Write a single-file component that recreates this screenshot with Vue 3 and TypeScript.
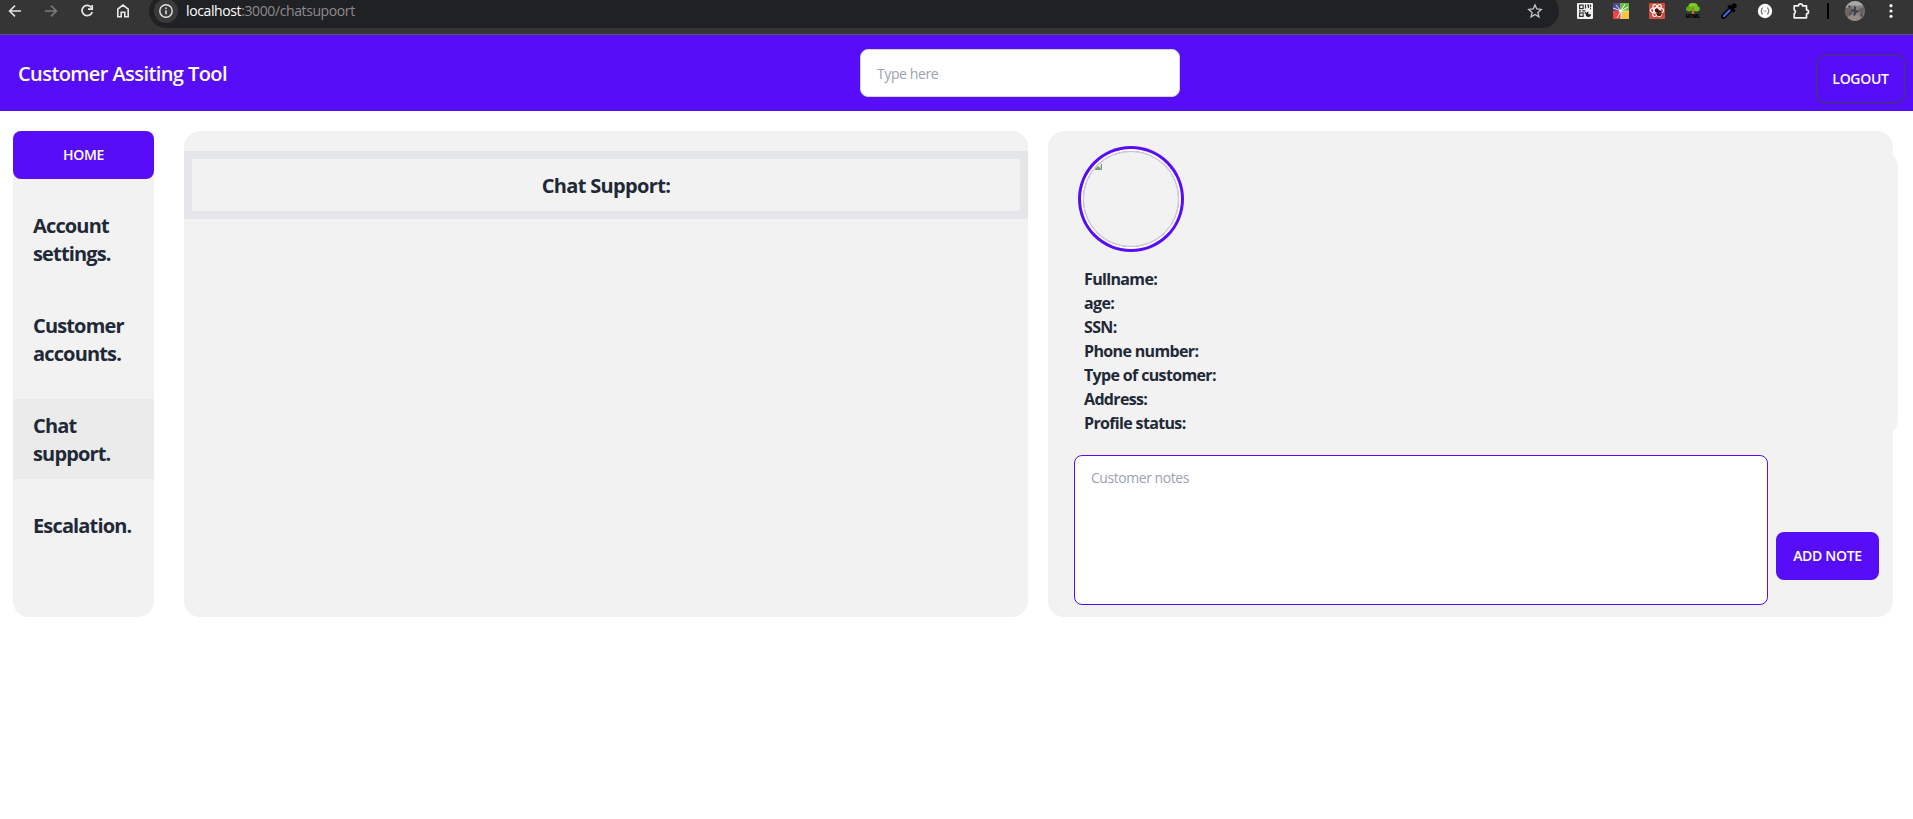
<script setup lang="ts">
import { ref } from 'vue'

interface NavItem {
  label: string
  active?: boolean
}

const navItems: NavItem[] = [
  { label: 'Account settings.' },
  { label: 'Customer accounts.' },
  { label: 'Chat support.', active: true },
  { label: 'Escalation.' },
]

const fields: string[] = [
  'Fullname:',
  'age:',
  'SSN:',
  'Phone number:',
  'Type of customer:',
  'Address:',
  'Profile status:',
]

const search = ref('')
const notes = ref('')
</script>

<template>
  <div class="page">
    <div class="chrome">
      <div class="chrome-row">
        <div class="slot">
          <svg width="16" height="16" viewBox="0 0 16 16" fill="none" stroke="#e3e3e3" stroke-width="1.6"><path d="M14 8H3M8 2.6 2.6 8 8 13.4" /></svg>
        </div>
        <div class="slot">
          <svg width="16" height="16" viewBox="0 0 16 16" fill="none" stroke="#7c7c7c" stroke-width="1.6"><path d="M2 8h11M8 2.6 13.4 8 8 13.4" /></svg>
        </div>
        <div class="slot">
          <svg width="16" height="16" viewBox="0 0 16 16" fill="none" stroke="#e9e9e9" stroke-width="1.7"><path d="M12.4 4.4A5.2 5.2 0 1 0 13.2 9" /><path d="M13.2 2v4.2H9" /></svg>
        </div>
        <div class="slot">
          <svg width="16" height="16" viewBox="0 0 16 16" fill="none" stroke="#e9e9e9" stroke-width="1.6"><path d="M2.8 6.2 8 2.1l5.2 4.1v7.6H9.8V9.2H6.2v4.6H2.8z" /></svg>
        </div>
        <div class="address">
          <div class="info">
            <svg width="16" height="16" viewBox="0 0 16 16" fill="none" stroke="#e3e3e3"><circle cx="8" cy="8" r="6.2" stroke-width="1.4" /><path d="M8 7.2v4M8 4.5v1.5" stroke-width="1.5" /></svg>
          </div>
          <div class="url"><span class="host">localhost</span>:3000/chatsupoort</div>
          <svg class="star" width="16" height="16" viewBox="0 0 16 16" fill="none" stroke="#c7c7c7" stroke-width="1.3"><path d="m8 1.9 1.8 4.1 4.5.4-3.4 3 1 4.4L8 11.5l-3.9 2.3 1-4.4-3.4-3L6.2 6z" /></svg>
        </div>
        <div class="slot">
          <svg width="16" height="16" viewBox="0 0 16 16"><rect width="16" height="16" rx="1" fill="#f1f1f1" /><g fill="none" stroke="#333" stroke-width="1.2"><rect x="2.6" y="2.1" width="3.5" height="3.5" /><rect x="2.6" y="9.9" width="3.5" height="3.5" /><path d="M8.5 1.6v4M10.2 2.1h1.2v3M13.5 1.5v2.8M13 5.6h1M2 7.8h2M5.3 7.8h3M8.3 9v1.8" /></g><circle cx="11.4" cy="11.3" r="2.6" fill="#222" /><path d="M11.4 11.3V8.4a3 3 0 0 1 3 2.9z" fill="#f1f1f1" /></svg>
        </div>
        <div class="slot">
          <svg width="16" height="16" viewBox="0 0 16 16"><path fill="#574794" d="M0 0h7v8H0z" /><path fill="#69bd3a" d="M7 0h9v8H7z" /><path fill="#f04445" d="M0 8h8v8H0z" /><path fill="#efc64a" d="M8 8h8v8H8z" /><path d="M8 8 3 2M8 8 0 5M8 8l4-7M8 8l7-4M8 8 4 15M8 8v8" stroke="#fff" stroke-width=".9" /><path d="M8 8h8" stroke="#fff" stroke-width=".5" /><circle cx="7.6" cy="8" r="1.5" fill="#fff" /></svg>
        </div>
        <div class="slot">
          <svg width="16" height="16" viewBox="0 0 16 16"><rect width="16" height="16" rx="1" fill="#d84b3b" /><g fill="none" stroke="#fff" stroke-width="1.1"><ellipse cx="8" cy="7.5" rx="6.7" ry="2.7" /><ellipse cx="8" cy="7.5" rx="6.7" ry="2.7" transform="rotate(60 8 7.5)" /><ellipse cx="8" cy="7.5" rx="6.7" ry="2.7" transform="rotate(120 8 7.5)" /></g><ellipse cx="10" cy="10.3" rx="2.6" ry="3" fill="#2a1714" /><circle cx="7.6" cy="7.2" r="1.7" fill="#2a1714" /><path d="M6 10h7M8 13.5l5-5" stroke="#d84b3b" stroke-width=".6" /></svg>
        </div>
        <div class="slot">
          <svg width="16" height="16" viewBox="0 0 16 16"><path d="M7 6h2l.5 5h-3z" fill="#b3752a" /><ellipse cx="8" cy="2.7" rx="4.5" ry="2.7" fill="#7bd321" /><ellipse cx="4.2" cy="5.8" rx="3.2" ry="2.6" fill="#58b615" /><ellipse cx="11.5" cy="5.8" rx="3.3" ry="2.7" fill="#65c51b" /><path d="M8 3v8" stroke="#b3752a" stroke-width="1.4" /><text class="html-mark" x="8" y="15" text-anchor="middle">HTML</text></svg>
        </div>
        <div class="slot">
          <svg width="16" height="16" viewBox="0 0 16 16"><path d="M2.5 13.5 10 6" stroke="#000" stroke-width="5" stroke-linecap="round" /><path d="M2.8 13.2 8.6 7.4" stroke="#3f62e0" stroke-width="2.2" stroke-linecap="round" /><path d="m7.5 2.6 6 6M10.5 5.5 13.3 2.7" stroke="#000" stroke-width="3.4" /><circle cx="13.2" cy="2.7" r="2.5" /></svg>
        </div>
        <div class="slot">
          <svg width="16" height="16" viewBox="0 0 16 16"><circle cx="8" cy="8" r="7.2" fill="#fff" /><path d="M5.8 4.8c-1.6 0-.5 2.5-2 3.2 1.5.7.4 3.2 2 3.2M10.2 4.8c1.6 0 .5 2.5 2 3.2-1.5.7-.4 3.2-2 3.2M6.6 8h.9M8.5 8h.9" fill="none" stroke="#444" stroke-width="1" /></svg>
        </div>
        <div class="slot">
          <svg width="18" height="18" viewBox="0 0 18 18" fill="none" stroke="#f1f1f1" stroke-width="1.7" stroke-linejoin="round"><path d="M2.2 3.8h4.3a2 2 0 0 1 4 0h4v4a2 2 0 0 1 0 4v4H2.2v-4.2a2 2 0 0 0 0-3.7z" /></svg>
        </div>
        <div class="divider-slot"><span class="divider"></span></div>
        <div class="slot">
          <svg width="20" height="20" viewBox="0 0 20 20"><defs><clipPath id="face"><circle cx="10" cy="10" r="10" /></clipPath></defs><g clip-path="url(#face)"><path fill="#85807d" d="M0 0h20v20H0z" /><path fill="#aaa7a9" d="M0 0h20v4l-7 1-4-1-9 3z" /><path fill="#6a6563" d="m0 8 6-2 3 4-4 5-5 1zM13 8l7-2v7l-5-1z" /><path fill="#968c87" d="m3 16 5-3 6 2 3 5H3z" /><path fill="#554b47" d="m3 5 2-1 1 2-2 1zm12 8 2-1 1 3-2 1zM4 12l2-1 1 2-2 1z" /><path fill="#3c4152" d="m9 5 2 1v3l3 1v1l-3 1-1 3-2-1 1-3-3-1v-1l3-1z" /></g></svg>
        </div>
        <div class="slot">
          <svg width="16" height="16" viewBox="0 0 16 16" fill="#f1f1f1"><circle cx="8" cy="2.7" r="1.6" /><circle cx="8" cy="8" r="1.6" /><circle cx="8" cy="13.3" r="1.6" /></svg>
        </div>
      </div>
    </div>

    <header class="navbar">
      <div class="brand">Customer Assiting Tool</div>
      <input v-model="search" class="search" type="text" placeholder="Type here" />
      <div class="nav-end"><button class="btn logout">LOGOUT</button></div>
    </header>

    <main class="content">
      <aside class="sidebar">
        <button class="btn home">HOME</button>
        <nav class="menu">
          <a v-for="item in navItems" :key="item.label" class="menu-item" :class="{ active: item.active }">{{ item.label }}</a>
        </nav>
      </aside>

      <section class="card chat">
        <h2 class="chat-title">Chat Support:</h2>
      </section>

      <section class="card customer">
        <div class="profile">
          <div class="avatar">
            <svg class="missing" width="8" height="6" viewBox="0 0 8 6"><path fill="#c9d6cc" d="m0 6 3-2 5-4v6z" /><path fill="#69ad5b" d="m1 5 3-3 3 3z" /><path d="M7.5 0v5.5H1" fill="none" stroke="#888" /></svg>
          </div>
          <ul class="fields">
            <li v-for="field in fields" :key="field">{{ field }}</li>
          </ul>
        </div>
        <div class="note-row">
          <textarea v-model="notes" class="notes" placeholder="Customer notes"></textarea>
          <button class="btn add">ADD NOTE</button>
        </div>
      </section>
    </main>
  </div>
</template>

<style>
body {
  margin: 0;
  background: #fff;
}
</style>

<style scoped>
* {
  box-sizing: border-box;
}
.page {
  height: 819px;
  overflow: hidden;
  background: #fff;
  color: #1f2937;
  font-family: 'Segoe UI', 'Open Sans', 'Noto Sans', sans-serif;
}
.chrome {
  height: 35px;
  overflow: hidden;
  background: #353535;
  border-bottom: 1px solid #5c5c5c;
}
.chrome-row {
  display: flex;
  align-items: center;
  height: 34px;
  margin: -6px 4px 0 -3px;
}
.slot {
  display: flex;
  flex: 0 0 36px;
  justify-content: center;
}
.divider-slot {
  display: flex;
  flex: 0 0 18px;
  justify-content: center;
}
.divider {
  width: 2px;
  height: 16px;
  background: #000;
}
.address {
  display: flex;
  flex: 1;
  align-items: center;
  height: 34px;
  margin: 0 8px;
  padding: 0 16px 0 5px;
  border-radius: 17px;
  background: #202124;
}
.info {
  display: flex;
  align-items: center;
  justify-content: center;
  width: 24px;
  height: 24px;
  border-radius: 50%;
  background: #3a3a3a;
}
.url {
  flex: 1;
  margin-left: 8px;
  color: #8c8c8c;
  font-size: 14px;
  line-height: 20px;
  letter-spacing: -0.39px;
}
.host {
  color: #fff;
}
.html-mark {
  fill: #000;
  font-size: 5px;
  font-weight: 800;
}
.navbar {
  display: grid;
  grid-template-columns: 842px 320px 1fr;
  align-items: center;
  height: 76px;
  padding: 0 8px 0 18px;
  background: #570df8;
}
.brand {
  padding-top: 2px;
  color: #fff;
  font-size: 20px;
  font-weight: 600;
  line-height: 28px;
  letter-spacing: -0.58px;
}
.search {
  width: 320px;
  height: 48px;
  padding: 1px 16px 0;
  border: 1px solid #d2d4d7;
  border-radius: 8px;
  outline: none;
  background: #fff;
  font: 14px 'Segoe UI', 'Open Sans', sans-serif;
  letter-spacing: -0.4px;
}
.search::placeholder,
.notes::placeholder {
  color: #9ca3af;
  opacity: 1;
}
.nav-end {
  display: flex;
  justify-content: flex-end;
  padding-top: 12px;
}
.btn {
  height: 48px;
  padding: 0;
  border: 0;
  border-radius: 8px;
  background: #570df8;
  color: #fff;
  font: 600 14px/14px 'Segoe UI', 'Open Sans', sans-serif;
  letter-spacing: -0.3px;
}
.logout {
  width: 89px;
  border: 1px solid #3d4451;
}
.content {
  display: flex;
  align-items: flex-start;
  padding: 20px 20px 0 13px;
}
.sidebar {
  width: 141px;
  height: 486px;
  margin-right: 30px;
  border-radius: 16px;
  background: #f2f2f2;
}
.home {
  display: block;
  width: 141px;
}
.menu {
  display: flex;
  flex-direction: column;
  gap: 20px;
  margin-top: 20px;
}
.menu-item {
  padding: 13px 10px 11px 20px;
  font-size: 20px;
  font-weight: 700;
  line-height: 28px;
  letter-spacing: -0.85px;
}
.menu-item.active {
  background: #ebebeb;
}
.card {
  height: 486px;
  border-radius: 16px;
  background: #f2f2f2;
}
.chat {
  width: 844px;
  margin-right: 20px;
  padding-top: 20px;
}
.chat-title {
  margin: 0;
  padding: 13px 12px 11px;
  border: 8px solid #e5e6ea;
  font-size: 20px;
  font-weight: 700;
  line-height: 28px;
  text-align: center;
  letter-spacing: -0.65px;
}
.customer {
  width: 845px;
  padding-top: 20px;
}
.profile {
  width: 850px;
  height: 285px;
  padding-left: 35px;
  border-radius: 16px;
  background: #f2f2f2;
}
.avatar {
  width: 96px;
  height: 96px;
  padding: 12px 10px;
  border: 1px solid #c8c4cf;
  border-radius: 50%;
  box-shadow: 0 0 0 2px #fff, 0 0 0 5px #570df8;
}
.missing {
  display: block;
}
.fields {
  margin: 0;
  padding: 20px 0 0 1px;
  list-style: none;
  font-size: 16px;
  font-weight: 700;
  line-height: 24px;
  letter-spacing: -0.65px;
}
.note-row {
  display: flex;
  align-items: center;
  gap: 8px;
  padding: 19px 0 0 26px;
}
.notes {
  display: block;
  width: 694px;
  height: 150px;
  padding: 12px 16px;
  border: 1px solid #570df8;
  border-radius: 8px;
  outline: none;
  resize: none;
  background: #fff;
  font: 14px/20px 'Segoe UI', 'Open Sans', sans-serif;
  letter-spacing: -0.45px;
}
.add {
  width: 103px;
  margin-top: 52px;
}
</style>
